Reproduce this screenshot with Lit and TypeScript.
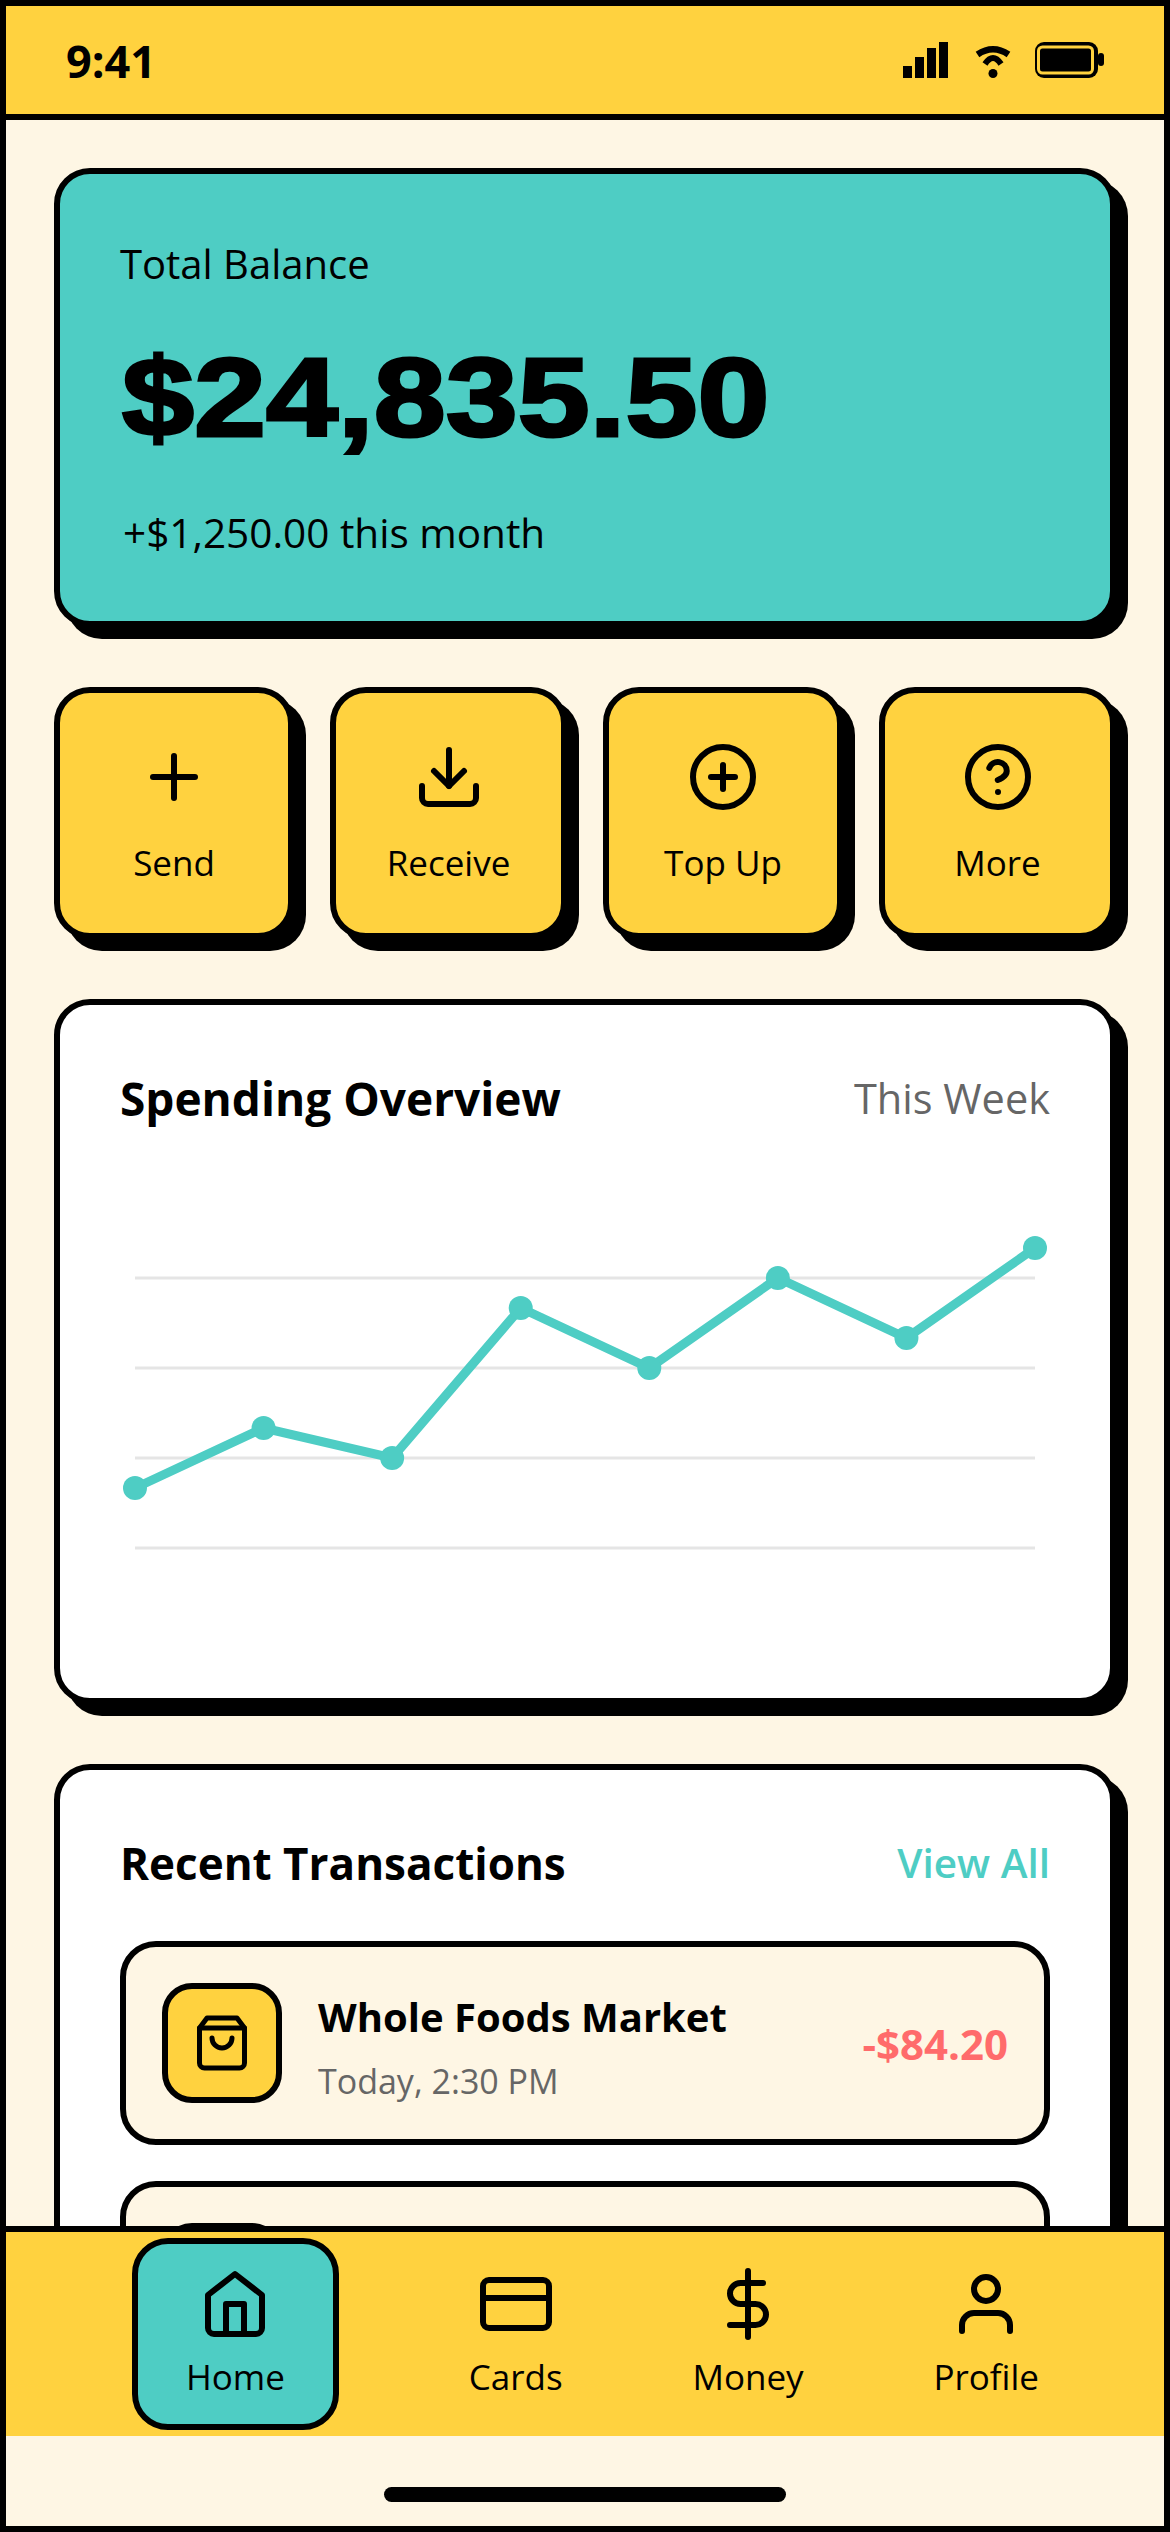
import { LitElement, html, css, svg } from "lit";
import { customElement } from "lit/decorators.js";

const feather = (body: unknown) => html`<svg class="icon" viewBox="0 0 24 24" fill="none" stroke="currentColor" stroke-width="2" stroke-linecap="round" stroke-linejoin="round">${body}</svg>`;

const icons = {
  plus: svg`<line x1="12" y1="5" x2="12" y2="19"/><line x1="5" y1="12" x2="19" y2="12"/>`,
  download: svg`<path d="M21 15v4a2 2 0 0 1-2 2H5a2 2 0 0 1-2-2v-4"/><polyline points="7 10 12 15 17 10"/><line x1="12" y1="15" x2="12" y2="3"/>`,
  plusCircle: svg`<circle cx="12" cy="12" r="10"/><line x1="12" y1="8" x2="12" y2="16"/><line x1="8" y1="12" x2="16" y2="12"/>`,
  help: svg`<circle cx="12" cy="12" r="10"/><path d="M9.09 9a3 3 0 0 1 5.83 1c0 2-3 3-3 3"/><line x1="12" y1="17" x2="12.01" y2="17"/>`,
  home: svg`<path d="M3 9l9-7 9 7v11a2 2 0 0 1-2 2H5a2 2 0 0 1-2-2z"/><polyline points="9 22 9 12 15 12 15 22"/>`,
  card: svg`<rect x="1" y="4" width="22" height="16" rx="2" ry="2"/><line x1="1" y1="10" x2="23" y2="10"/>`,
  dollar: svg`<line x1="12" y1="1" x2="12" y2="23"/><path d="M17 5H9.5a3.5 3.5 0 0 0 0 7h5a3.5 3.5 0 0 1 0 7H6"/>`,
  user: svg`<path d="M20 21v-2a4 4 0 0 0-4-4H8a4 4 0 0 0-4 4v2"/><circle cx="12" cy="7" r="4"/>`,
  bag: svg`<path d="M6 2L3 6v14a2 2 0 0 0 2 2h14a2 2 0 0 0 2-2V6l-3-4z"/><line x1="3" y1="6" x2="21" y2="6"/><path d="M16 10a4 4 0 0 1-8 0"/>`,
};

const actions = [
  { label: "Send", icon: icons.plus },
  { label: "Receive", icon: icons.download },
  { label: "Top Up", icon: icons.plusCircle },
  { label: "More", icon: icons.help },
];

const tabs = [
  { label: "Home", icon: icons.home, active: true },
  { label: "Cards", icon: icons.card, active: false },
  { label: "Money", icon: icons.dollar, active: false },
  { label: "Profile", icon: icons.user, active: false },
];

const chartYs = [300, 240, 270, 120, 180, 90, 150, 60];
const chartPts = chartYs.map((y, i) => [15 + (900 * i) / 7, y]);

@customElement("app-root")
export class AppRoot extends LitElement {
  static styles = css`
    :host {
      display: flex;
      flex-direction: column;
      box-sizing: border-box;
      width: 1170px;
      height: 2532px;
      border: 6px solid #000;
      background: #fef6e4;
      color: #000;
      font-family: "Open Sans", "Noto Sans", sans-serif;
      overflow: hidden;
    }
    .status {
      flex: none;
      height: 114px;
      box-sizing: border-box;
      background: #ffd23f;
      border-bottom: 6px solid #000;
      display: flex;
      align-items: center;
      justify-content: space-between;
      padding: 0 60px;
    }
    .time {
      font-size: 45px;
      font-weight: 700;
      line-height: 56px;
      margin-top: 2px;
    }
    .status-icons { display: block; }
    main {
      flex: 1;
      min-height: 0;
      overflow: hidden;
      padding: 48px;
      display: flex;
      flex-direction: column;
      gap: 60px;
    }
    .card {
      flex: none;
      box-sizing: border-box;
      border: 6px solid #000;
      border-radius: 36px;
      box-shadow: 12px 12px 0 #000;
      background: #fff;
      padding: 60px;
    }
    .balance { background: #4ecdc4; height: 459px; }
    .balance .label { font-size: 40px; line-height: 56px; margin-top: 2px; }
    .amount {
      font-family: "Liberation Sans", Arial, sans-serif;
      font-weight: 700;
      font-size: 112px;
      line-height: 128px;
      margin-top: 42px;
      margin-left: 2px;
      -webkit-text-stroke: 3px #000;
      transform: scaleX(1.155);
      transform-origin: left center;
    }
    .change { font-size: 40.5px; line-height: 64px; margin-top: 39px; margin-left: 3px; }
    .actions {
      flex: none;
      display: grid;
      grid-template-columns: 240px 237px 240px 237px;
      gap: 36px;
    }
    .action {
      box-sizing: border-box;
      height: 252px;
      border: 6px solid #000;
      border-radius: 36px;
      box-shadow: 12px 12px 0 #000;
      background: #ffd23f;
      padding-top: 48px;
      display: flex;
      flex-direction: column;
      align-items: center;
      gap: 26px;
    }
    .icon { display: block; width: 72px; height: 72px; flex: none; }
    .action span, .tab span { font-size: 35px; line-height: 48px; font-weight: 500; }
    .head {
      display: flex;
      justify-content: space-between;
      align-items: center;
      height: 72px;
    }
    .head h2 { margin: -6px 0 0; font-size: 46px; font-weight: 700; line-height: 72px; }
    .head h2.tight { font-size: 44px; }
    .head .side { font-size: 41.5px; line-height: 56px; color: #666; margin-top: -6px; }
    .head .link { color: #4ecdc4; font-size: 40.5px; font-weight: 600; }
    .chart-card { height: 705px; }
    .chart { display: block; margin-top: 51px; width: 930px; height: 450px; }
    .tx-card { flex: none; }
    .tx-list { display: flex; flex-direction: column; gap: 36px; margin-top: 39px; }
    .tx {
      box-sizing: border-box;
      height: 204px;
      border: 6px solid #000;
      border-radius: 36px;
      background: #fef6e4;
      padding: 36px;
      display: flex;
      align-items: center;
      gap: 36px;
    }
    .tx-icon {
      box-sizing: border-box;
      width: 120px;
      height: 120px;
      flex: none;
      border: 6px solid #000;
      border-radius: 30px;
      background: #ffd23f;
      display: flex;
      align-items: center;
      justify-content: center;
    }
    .tx-icon .icon { width: 60px; height: 60px; }
    .tx-body { flex: 1; min-width: 0; margin-top: 7px; }
    .tx-name { font-size: 40px; font-weight: 700; line-height: 60px; }
    .tx-date { font-size: 34px; line-height: 52px; color: #666; margin-top: 8px; }
    .tx-amount { font-size: 42px; font-weight: 700; line-height: 60px; color: #ff6b6b; margin-top: 2px; }
    nav {
      flex: none;
      position: relative;
      height: 210px;
      box-sizing: border-box;
      background: #ffd23f;
      border-top: 6px solid #000;
      padding: 6px 125px 6px 126px;
      display: flex;
      justify-content: space-between;
      align-items: stretch;
    }
    .tab {
      box-sizing: border-box;
      padding-top: 30px;
      display: flex;
      flex-direction: column;
      align-items: center;
      gap: 13px;
    }
    .tab.active {
      background: #4ecdc4;
      border: 6px solid #000;
      border-radius: 36px;
      padding: 24px 48px 0;
    }
    .home-bar {
      flex: none;
      height: 90px;
      display: flex;
      justify-content: center;
      align-items: flex-end;
      padding-bottom: 24px;
      box-sizing: border-box;
    }
    .home-bar i {
      display: block;
      width: 402px;
      height: 15px;
      border-radius: 8px;
      background: #000;
    }
  `;

  render() {
    const line = chartPts.map((p) => p.join(",")).join(" ");
    return html`
      <header class="status">
        <div class="time">9:41</div>
        <svg class="status-icons" width="201" height="36" viewBox="900 42 201 36">
          <rect x="900" y="66" width="9" height="12"/>
          <rect x="912" y="57" width="9" height="21"/>
          <rect x="924" y="48" width="9" height="30"/>
          <rect x="936" y="42" width="9" height="36"/>
          <path d="M974.5 54.5Q990 44 1005.5 54.5" fill="none" stroke="#000" stroke-width="6.5"/>
          <path d="M982 64Q990 52 998 64" fill="none" stroke="#000" stroke-width="6"/>
          <circle cx="990" cy="73.5" r="4.5"/>
          <rect x="1032" y="42" width="63" height="36" rx="9"/>
          <rect x="1035.5" y="47" width="54" height="26" rx="4" fill="none" stroke="#ffd23f" stroke-width="3"/>
          <rect x="1095" y="53" width="6" height="13" rx="3"/>
        </svg>
      </header>
      <main>
        <section class="card balance">
          <div class="label">Total Balance</div>
          <div class="amount">$24,835.50</div>
          <div class="change">+$1,250.00 this month</div>
        </section>
        <section class="actions">
          ${actions.map((a) => html`<div class="action">${feather(a.icon)}<span>${a.label}</span></div>`)}
        </section>
        <section class="card chart-card">
          <div class="head"><h2>Spending Overview</h2><span class="side">This Week</span></div>
          <svg class="chart" viewBox="0 0 930 450">
            ${[90, 180, 270, 360].map((y) => svg`<line x1="15" x2="915" y1=${y} y2=${y} stroke="#e5e5e5" stroke-width="3"/>`)}
            <polyline points=${line} fill="none" stroke="#4ecdc4" stroke-width="9"/>
            ${chartPts.map((p) => svg`<circle cx=${p[0]} cy=${p[1]} r="12" fill="#4ecdc4"/>`)}
          </svg>
        </section>
        <section class="card tx-card">
          <div class="head"><h2 class="tight">Recent Transactions</h2><span class="side link">View All</span></div>
          <div class="tx-list">
            <div class="tx">
              <div class="tx-icon">${feather(icons.bag)}</div>
              <div class="tx-body">
                <div class="tx-name">Whole Foods Market</div>
                <div class="tx-date">Today, 2:30 PM</div>
              </div>
              <div class="tx-amount">-$84.20</div>
            </div>
            <div class="tx"><div class="tx-icon"></div></div>
          </div>
        </section>
      </main>
      <nav>
        ${tabs.map((t) => html`<div class="tab ${t.active ? "active" : ""}">${feather(t.icon)}<span>${t.label}</span></div>`)}
      </nav>
      <div class="home-bar"><i></i></div>
    `;
  }
}
